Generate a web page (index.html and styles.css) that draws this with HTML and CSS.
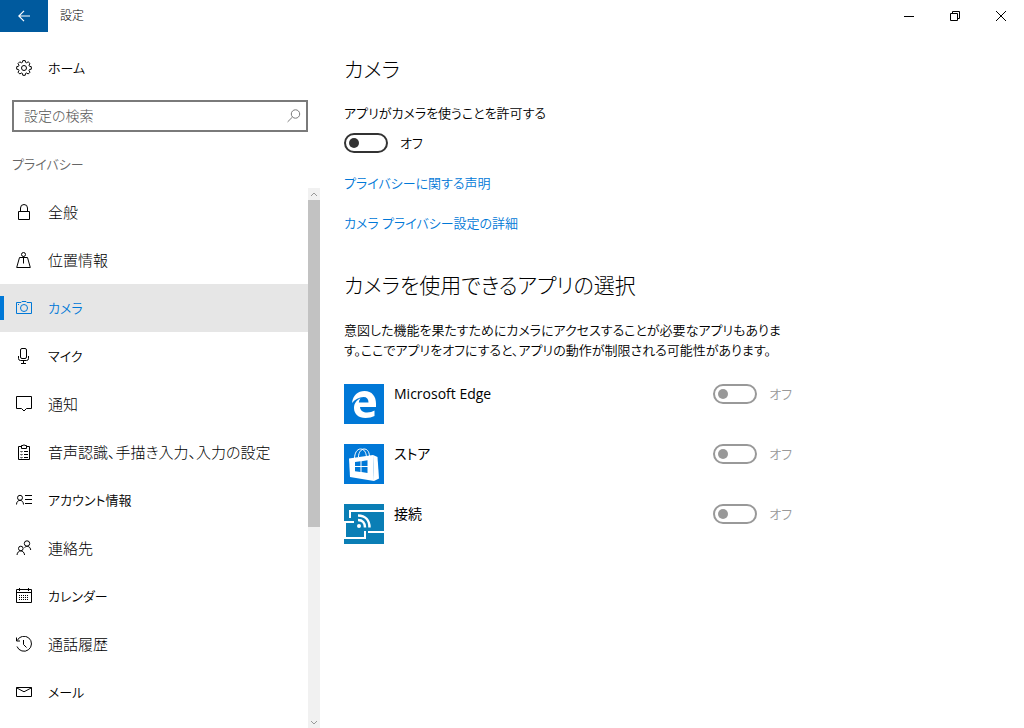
FILE: index.html
```html
<!DOCTYPE html>
<html lang="ja">
<head>
  <meta charset="UTF-8">
  <title>設定</title>
  <meta name="viewport" content="width=device-width, initial-scale=1.0">
  <link rel="stylesheet" href="styles.css">
</head>
<body>
  <header class="titlebar">
    <button class="back" aria-label="戻る">
      <svg width="12" height="12" viewBox="0 0 12 12"><path stroke-width="1.2" d="M12 6H.8M6 .8.8 6 6 11.2"/></svg>
    </button>
    <span class="title">設定</span>
    <div class="window-controls">
      <button aria-label="最小化"><svg width="10" height="10" viewBox="0 0 10 10"><path d="M0 5.5h10"/></svg></button>
      <button aria-label="元に戻す"><svg width="10" height="10" viewBox="0 0 10 10"><path d="M.5 2.5h7v7h-7zM2.5 2.5v-2h7v7h-2"/></svg></button>
      <button aria-label="閉じる"><svg width="10" height="10" viewBox="0 0 10 10"><path d="M0 0l10 10M10 0L0 10"/></svg></button>
    </div>
  </header>

  <div class="layout">
    <aside class="sidebar">
      <a class="item kana" href="#">
        <svg class="icon" viewBox="0 0 16 16"><circle cx="8" cy="8" r="2.5"/><path d="M6.8.6h2.4l.4 1.8 1 .4 1.6-1 1.8 1.8-1 1.6.4 1 1.9.5v2.5l-1.9.4-.4 1 1 1.6-1.8 1.8-1.6-1-1 .4-.4 1.9H6.8l-.4-1.9-1-.4-1.6 1L2 12.2l1-1.6-.4-1L.7 9.2V6.7l1.900-.5.4-1-1-1.6 1.8-1.8 1.6 1 1-.4z"/></svg>
        ホーム
      </a>
      <label class="search">
        <input type="text" placeholder="設定の検索" aria-label="設定の検索">
        <svg width="14" height="14" viewBox="0 0 14 14"><circle cx="8.5" cy="5" r="4.2"/><path d="M5.5 8L.6 12.9"/></svg>
      </label>
      <h2 class="group kana">プライバシー</h2>

      <div class="list">
        <nav>
          <a class="item" href="#">
            <svg class="icon" viewBox="0 0 16 16"><path d="M2.5 7.5h11v8h-11zM4.5 7.5V4a3.5 3.5 0 0 1 7 0v3.5"/></svg>
            全般
          </a>
          <a class="item" href="#">
            <svg class="icon" viewBox="0 0 16 16"><circle cx="7.5" cy="2.5" r="2"/><path d="M7.5 4.5v7M3.5 5.5h8M3.5 5.5L.7 15.5h13.6L11.500 5.5"/></svg>
            位置情報
          </a>
          <a class="item kana active" href="#">
            <svg class="icon" viewBox="0 0 16 16"><path d="M.5 2.5h4.500l1-1h4l1 1h4.500v11H.5zM2 4.500h1"/><circle cx="8" cy="8" r="3.5"/></svg>
            カメラ
          </a>
          <a class="item kana" href="#">
            <svg class="icon" viewBox="0 0 16 16"><rect x="4.5" y=".5" width="6" height="10" rx="1.5"/><path d="M2.5 8v2.500q0 2 2 2h6q2 0 2-2V8M7.500 12.500v3M5 15.500h5"/></svg>
            マイク
          </a>
          <a class="item" href="#">
            <svg class="icon" viewBox="0 0 16 16"><path d="M.5.5h15v12h-5L8 15l-2.500-2.500h-5z"/></svg>
            通知
          </a>
          <a class="item" href="#">
            <svg class="icon" viewBox="0 0 16 16"><path d="M5 2.500H2.500v13h11v-13H11M5.500 4.500v-3h1.500q1-1.500 2 0h1.500v3zM4.500 7.500l1 .5 1-1M8 7.500h4M4.500 10.500l1 .5 1-1M8 10.500h4M4.500 13.500l1 .5 1-1M8 13.500h4"/></svg>
            音声認識、手描き入力、入力の設定
          </a>
          <a class="item kana" href="#">
            <svg class="icon" viewBox="0 0 16 16"><circle cx="4" cy="5.8" r="2.5"/><path d="M.5 12.500C.5 7 7.500 7 7.500 12.500M9 3.500h7M9 7.500h7M9 11.500h7"/></svg>
            アカウント情報
          </a>
          <a class="item" href="#">
            <svg class="icon" viewBox="0 0 16 16"><circle cx="11" cy="3.5" r="2.7"/><circle cx="4.800" cy="8.500" r="2.300"/><path d="M8.500 7.500c3-2.500 6-.5 6.200 2.500M1 15c.5-5.500 7-5.500 7.600 0"/></svg>
            連絡先
          </a>
          <a class="item kana" href="#">
            <svg class="icon" viewBox="0 0 16 16"><path d="M.5 1.5h15v13H.5zM.5 4.500h15M3.500 0v3M12.500 0v3"/><path stroke-dasharray="1 1" d="M3 7.500h10M3 9.500h10M3 11.500h10"/></svg>
            カレンダー
          </a>
          <a class="item" href="#">
            <svg class="icon" viewBox="0 0 16 16"><path d="M1.200 4.500A7.500 7.500 0 1 1 1 10.500M.5 1.500v3.500H4M7.500 4v4.500l3 3"/></svg>
            通話履歴
          </a>
          <a class="item kana" href="#">
            <svg class="icon" viewBox="0 0 16 16"><path d="M.5 3.5h15v9H.5zM.5 3.800L8 7.800l7.500-4"/></svg>
            メール
          </a>
        </nav>
        <div class="scrollbar">
          <button aria-label="上へ"><svg width="8" height="5" viewBox="0 0 8 5"><path d="M1 4l3-3 3 3"/></svg></button>
          <div class="track"><div class="thumb"></div></div>
          <button aria-label="下へ"><svg width="8" height="5" viewBox="0 0 8 5"><path d="M1 1l3 3 3-3"/></svg></button>
        </div>
      </div>
    </aside>

    <main class="content kana">
      <h1>カメラ</h1>
      <p class="caption" id="allow">アプリがカメラを使うことを許可する</p>
      <label class="switch"><input type="checkbox" aria-labelledby="allow">オフ</label>
      <a class="link" href="#">プライバシーに関する声明</a>
      <a class="link" href="#">カメラ プライバシー設定の詳細</a>

      <h1 class="choose">カメラを使用できるアプリの選択</h1>
      <p class="description">意図した機能を果たすためにカメラにアクセスすることが必要なアプリもありま<br>す。ここでアプリをオフにすると、アプリの動作が制限される可能性があります。</p>

      <ul class="apps">
        <li>
          <svg class="logo" viewBox="0 0 40 40">
            <rect width="40" height="40" fill="#0078d7"/>
            <path fill="#fff" d="M8 19C9 11 14 7 20.500 7 28 7 32 12.500 32 19.500V23H16c.3 4 3.500 5.500 7 5.500 3 0 5.500-.8 7.500-2V32c-2.500 1.300-5.500 2-9 2-7 0-11.500-4-11.500-10 0-4.500 2.500-8 6.500-9.800-1 1.300-1.500 2.800-1.700 4.300h9.700c0-3.500-1.700-5.500-5-5.500-4.500 0-8.500 2.500-11.500 6z"/>
          </svg>
          <span class="name" id="edge">Microsoft Edge</span>
          <label class="switch"><input type="checkbox" aria-labelledby="edge" disabled>オフ</label>
        </li>
        <li>
          <svg class="logo" viewBox="0 0 40 40">
            <rect width="40" height="40" fill="#0078d7"/>
            <path fill="none" stroke="#fff" d="M10.500 15c0-6 2.500-10 6-10s5.500 3 6 8M14.500 13c0-5 3-8 5.500-8 3 0 5 2 5.500 7"/>
            <path fill="#fff" d="M5 14.500L29 11l1 26-24-4z"/>
            <path fill="#fff" d="M29 11l4.500 2L35 34.500 30 37z"/>
            <path fill="#0078d7" d="M11 18l5.500-.7V22H11zM17.500 17.200l6-.9V22h-6zM11 23h5.500v5l-5.500-.8zM17.500 23h6v6l-6-.9z"/>
          </svg>
          <span class="name" id="store">ストア</span>
          <label class="switch"><input type="checkbox" aria-labelledby="store" disabled>オフ</label>
        </li>
        <li>
          <svg class="logo" viewBox="0 0 40 40">
            <rect width="40" height="40" fill="#0a7eb5"/>
            <path fill="none" stroke="#fff" stroke-width="2" d="M6 14V7h34M24 28h16M10 18H1v16h20v-7"/>
            <path fill="none" stroke="#fff" stroke-width="2.500" d="M14 16c4.500 0 7 3 7 7.500M14 11.500c7.500 0 11.500 5 11.500 12"/>
            <circle cx="15" cy="22" r="2" fill="#fff"/>
          </svg>
          <span class="name" id="connect">接続</span>
          <label class="switch"><input type="checkbox" aria-labelledby="connect" disabled>オフ</label>
        </li>
      </ul>
    </main>
  </div>
</body>
</html>
```
FILE: styles.css
```css
* { box-sizing: border-box; }
body {
  margin: 0;
  height: 100vh;
  display: flex;
  flex-direction: column;
  background: #fff;
  color: #000;
  font-family: "Noto Sans", "Noto Sans CJK JP", sans-serif;
  font-size: 15px;
  font-weight: 300;
  line-height: 20px;
  font-feature-settings: "palt";
  overflow: hidden;
}
h1, h2, p, ul { margin: 0; padding: 0; font-weight: inherit; }
a { text-decoration: none; }
button {
  border: none;
  padding: 0;
  background: none;
  display: flex;
  align-items: center;
  justify-content: center;
}
svg { flex: none; fill: none; stroke: currentColor; }
.kana {
  font-size: 13px;
  font-weight: 350;
}

/* Title bar */
.titlebar {
  display: flex;
  align-items: center;
  height: 32px;
  flex: none;
}
.back {
  width: 48px;
  height: 32px;
  background: #005a9e;
  color: #fff;
}
.title {
  margin-left: 12px;
  font-size: 12px;
}
.window-controls {
  display: flex;
  margin-left: auto;
}
.window-controls button {
  width: 46px;
  height: 32px;
  color: #000;
}

.layout {
  flex: 1;
  min-height: 0;
  display: flex;
}

/* Sidebar */
.sidebar {
  width: 320px;
  flex: none;
  display: flex;
  flex-direction: column;
  padding-top: 12px;
}
.item {
  display: flex;
  align-items: center;
  gap: 16px;
  height: 48px;
  padding-left: 16px;
  color: #000;
}
.icon {
  width: 16px;
  height: 16px;
}
.search {
  display: flex;
  align-items: center;
  height: 32px;
  margin: 8px 12px 0;
  padding: 0 5px 0 10px;
  border: 2px solid #7a7a7a;
  color: #7a7a7a;
  font-size: 14px;
}
.search input {
  flex: 1;
  min-width: 0;
  border: none;
  outline: none;
  padding: 0;
  font: inherit;
}
.search input::placeholder { color: #555; }
.group {
  padding: 22px 12px 14px;
  color: #666;
}
.list {
  flex: 1;
  min-height: 0;
  display: flex;
}
.list nav {
  flex: 1;
  overflow: hidden;
}
.active {
  background: linear-gradient(#0078d7, #0078d7) 0 50% / 4px 24px no-repeat #e6e6e6;
  color: #0078d7;
}
.scrollbar {
  width: 12px;
  display: flex;
  flex-direction: column;
  background: #f1f1f1;
  color: #999;
}
.scrollbar button {
  height: 12px;
  color: inherit;
}
.track { flex: 1; }
.thumb {
  height: 63.4%;
  background: #c2c2c2;
}

/* Content */
.content {
  flex: 1;
  display: flex;
  flex-direction: column;
  align-items: flex-start;
  padding: 21px 24px 0;
}
h1 {
  font-size: 21px;
  font-weight: 300;
  line-height: 32px;
}
.caption { margin-top: 18px; }
.switch {
  display: flex;
  align-items: center;
  gap: 12px;
  margin: 10px 0;
}
.switch input {
  appearance: none;
  width: 44px;
  height: 20px;
  margin: 0;
  padding: 3px;
  border: 2px solid #333;
  border-radius: 10px;
  color: #333;
}
.switch input::before {
  content: "";
  display: block;
  width: 10px;
  height: 10px;
  border-radius: 50%;
  background: currentColor;
}
.link {
  margin: 10px 0;
  color: #0078d7;
}
.choose { margin-top: 26px; }
.description {
  margin-top: 19px;
}
.apps {
  width: 100%;
  max-width: 448px;
  margin-top: 24px;
  list-style: none;
}
.apps li {
  display: flex;
  align-items: flex-start;
  gap: 10px;
  height: 60px;
}
.logo {
  width: 40px;
  height: 40px;
  stroke: none;
}
.name {
  font-family: "Open Sans", "Noto Sans CJK JP", sans-serif;
  font-size: 14px;
  font-weight: 400;
}
.apps .switch {
  margin: 0 0 0 auto;
  color: #999;
}
.apps .switch input {
  border-color: #999;
  color: #999;
}
```
